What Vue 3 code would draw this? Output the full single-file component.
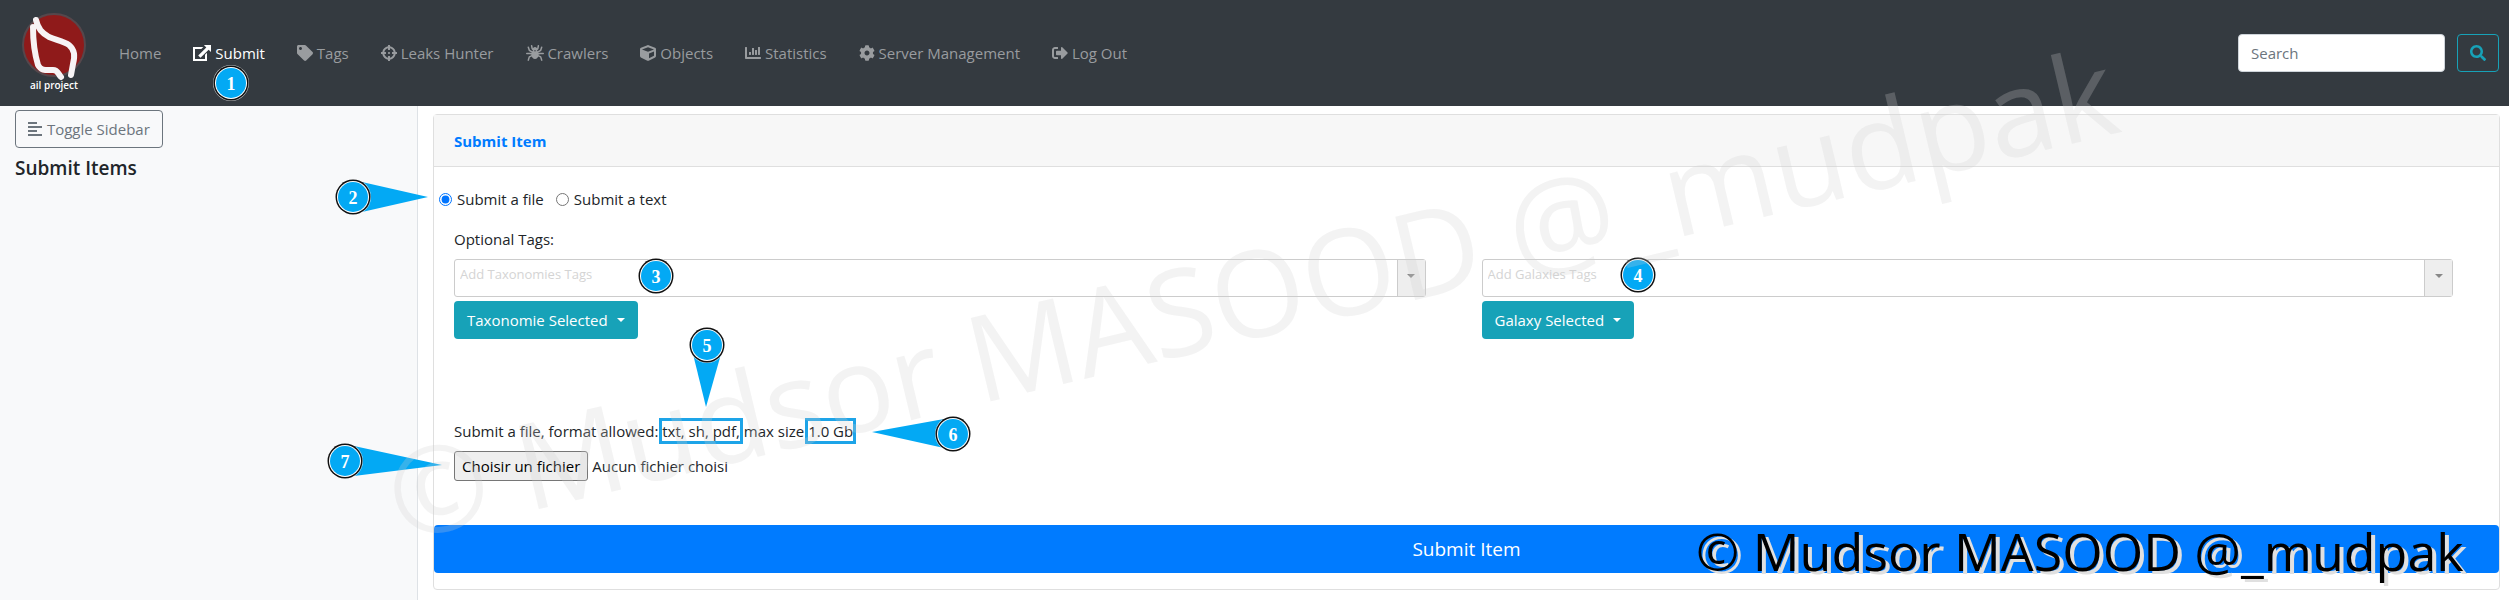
<template>
  <div class="page">
    <header class="navbar">
      <a class="brand" href="#" aria-label="ail project">
        <svg width="70" height="80" viewBox="0 0 70 80">
          <circle cx="36" cy="32" r="31" fill="#8f1a1a" stroke="#56474c" stroke-width="2" />
          <path
            d="M18 7 C20 16 24 20 31 24 C38 27 46 28 51 32 C57 37 57 43 55 51 L53 62 M15 14 C15 28 17 42 20 52 C23 58 28 57 35 57 C40 57 40 61 43 64"
            fill="none" stroke="#f7f3f5" stroke-width="6" stroke-linecap="round" stroke-linejoin="round"
          />
          <text x="36" y="76" text-anchor="middle" class="brand-text">ail project</text>
        </svg>
      </a>
      <nav class="nav-links">
        <a
          v-for="link in links"
          :key="link.label"
          href="#"
          class="nav-link"
          :class="{ active: link.active }"
        >
          <svg v-if="link.icon" class="icon" :class="{ wide: link.wide }" :viewBox="link.wide ? '0 0 576 512' : '0 0 512 512'">
            <path :d="link.icon" fill-rule="evenodd" />
            <path v-if="link.lines" :d="link.lines" class="icon-lines" />
          </svg>
          {{ link.label }}
        </a>
      </nav>
      <form class="search-form" @submit.prevent>
        <input v-model="query" class="search-input" type="search" placeholder="Search" aria-label="Search" />
        <button class="search-btn" type="submit" aria-label="Search">
          <svg class="icon" viewBox="0 0 512 512"><path :d="searchIcon" /></svg>
        </button>
      </form>
    </header>

    <div class="body-row">
      <aside class="sidebar">
        <button type="button" class="toggle-btn">
          <svg class="toggle-icon" viewBox="0 0 14 16">
            <path d="M0 1h9v2H0zM0 5h14v2H0zM0 9h9v2H0zM0 13h14v2H0z" />
          </svg>
          Toggle Sidebar
        </button>
        <h5 class="sidebar-title">Submit Items</h5>
      </aside>

      <main class="main">
        <form class="card" @submit.prevent>
          <div class="card-header">Submit Item</div>
          <div class="card-body">
            <div class="radios">
              <label><input v-model="mode" type="radio" name="mode" value="file" />Submit a file</label>
              <label><input v-model="mode" type="radio" name="mode" value="text" />Submit a text</label>
            </div>
            <div class="tags-label">Optional Tags:</div>
            <div class="tags-row">
              <div v-for="tag in tagFields" :key="tag.button" class="tag-col">
                <div class="tag-box">
                  <input type="text" class="tag-input" :placeholder="tag.placeholder" :aria-label="tag.placeholder" />
                  <button type="button" class="tag-trigger" :aria-label="tag.placeholder">
                    <span class="caret"></span>
                  </button>
                </div>
                <button type="button" class="selected-btn">{{ tag.button }}<span class="caret"></span></button>
              </div>
            </div>
            <p class="file-help">
              Submit a file, format allowed: <span class="highlight">txt, sh, pdf,</span> max size <span class="highlight">1.0 Gb</span>
            </p>
            <div class="file-row">
              <input id="file" type="file" class="file-input" />
              <label for="file" class="file-btn">Choisir un fichier</label>
              <span>Aucun fichier choisi</span>
            </div>
          </div>
          <button type="submit" class="submit-btn">Submit Item</button>
        </form>
      </main>
    </div>

    <!-- numbered callouts and copyright marks over the page -->
    <svg class="overlay">
      <g v-for="m in markers" :key="m.n">
        <polygon v-if="m.tip" :points="m.tip" fill="#03a9f4" />
        <circle :cx="m.x" :cy="m.y" r="18" fill="#fff" fill-opacity="0.7" />
        <circle :cx="m.x" :cy="m.y" r="17.5" fill="#111" />
        <circle :cx="m.x" :cy="m.y" r="16" fill="#fff" />
        <circle :cx="m.x" :cy="m.y" r="15" fill="#03a9f4" />
        <text :x="m.x" :y="m.y + 7" text-anchor="middle" class="marker-text">{{ m.n }}</text>
      </g>
      <text class="watermark" x="0" y="0" transform="translate(400 542) rotate(-13.4)">© Mudsor MASOOD @_mudpak</text>
      <text class="signature shade" x="1700" y="574">© Mudsor MASOOD @_mudpak</text>
      <text class="signature" x="1696" y="571">© Mudsor MASOOD @_mudpak</text>
    </svg>
  </div>
</template>

<script setup>
import { ref } from 'vue';

const query = ref('');
const mode = ref('file');

// Navigation
const links = [
  { label: 'Home' },
  {
    label: 'Submit',
    active: true,
    wide: true,
    icon: 'M0 64H330L266 128H64V448H384V310L448 246V512H0ZM350 0H576V226L500 150L240 410L166 336L426 76Z'
  },
  {
    label: 'Tags',
    icon: 'M0 252.118V48C0 21.49 21.49 0 48 0h204.118a48 48 0 0 1 33.941 14.059l211.882 211.882c18.745 18.745 18.745 49.137 0 67.882L293.823 497.941c-18.745 18.745-49.137 18.745-67.882 0L14.059 286.059A48 48 0 0 1 0 252.118zM112 64c-26.51 0-48 21.49-48 48s21.49 48 48 48 48-21.49 48-48-21.49-48-48-48z'
  },
  {
    label: 'Leaks Hunter',
    icon: 'M500 224h-30.364C455.724 130.325 381.675 56.276 288 42.364V12c0-6.627-5.373-12-12-12h-40c-6.627 0-12 5.373-12 12v30.364C130.325 56.276 56.276 130.325 42.364 224H12c-6.627 0-12 5.373-12 12v40c0 6.627 5.373 12 12 12h30.364C56.276 381.675 130.325 455.724 224 469.636V500c0 6.627 5.373 12 12 12h40c6.627 0 12-5.373 12-12v-30.364C381.675 455.724 455.724 381.675 469.636 288H500c6.627 0 12-5.373 12-12v-40c0-6.627-5.373-12-12-12zM288 404.634V364c0-6.627-5.373-12-12-12h-40c-6.627 0-12 5.373-12 12v40.634C165.826 392.232 119.783 346.243 107.366 288H148c6.627 0 12-5.373 12-12v-40c0-6.627-5.373-12-12-12h-40.634C119.768 165.826 165.757 119.783 224 107.366V148c0 6.627 5.373 12 12 12h40c6.627 0 12-5.373 12-12v-40.634C346.174 119.768 392.217 165.757 404.634 224H364c-6.627 0-12 5.373-12 12v40c0 6.627 5.373 12 12 12h40.634C392.232 346.174 346.243 392.217 288 404.634zM288 256c0 17.673-14.327 32-32 32s-32-14.327-32-32c0-17.673 14.327-32 32-32s32 14.327 32 32z'
  },
  {
    label: 'Crawlers',
    wide: true,
    icon: 'M288 160C370 160 400 240 400 310C400 390 350 448 288 448S176 390 176 310C176 240 206 160 288 160ZM288 64C334 64 362 96 362 134S330 200 288 200S214 172 214 134S242 64 288 64Z',
    lines: 'M24 272H130L210 290M552 272H446L366 290M74 70L106 170L210 232M502 70L470 170L366 232M74 484L106 380L210 330M502 484L470 380L366 330M180 24L196 110L250 180M396 24L380 110L326 180'
  },
  {
    label: 'Objects',
    icon: 'M239.1 6.3l-208 78c-18.7 7-31.1 25-31.1 45v225.1c0 18.2 10.3 34.8 26.5 42.9l208 104c13.5 6.8 29.4 6.8 42.9 0l208-104c16.3-8.1 26.5-24.8 26.5-42.9V129.3c0-20-12.4-37.9-31.1-44.9l-208-78C262 2.2 250 2.2 239.1 6.3zM256 68.4l192 72v1.1l-192 78-192-78v-1.1l192-72zm32 356V275.5l160-65v133.9l-160 80z'
  },
  {
    label: 'Statistics',
    icon: 'M332.8 320h38.4c6.4 0 12.8-6.4 12.8-12.8V172.8c0-6.4-6.4-12.8-12.8-12.8h-38.4c-6.4 0-12.8 6.4-12.8 12.8v134.4c0 6.4 6.4 12.8 12.8 12.8zm96 0h38.4c6.4 0 12.8-6.4 12.8-12.8V76.8c0-6.4-6.4-12.8-12.8-12.8h-38.4c-6.4 0-12.8 6.4-12.8 12.8v230.4c0 6.4 6.4 12.8 12.8 12.8zm-288 0h38.4c6.4 0 12.8-6.4 12.8-12.8v-70.4c0-6.4-6.4-12.8-12.8-12.8h-38.4c-6.4 0-12.8 6.4-12.8 12.8v70.4c0 6.4 6.4 12.8 12.8 12.8zm96 0h38.4c6.4 0 12.8-6.4 12.8-12.8V108.8c0-6.4-6.4-12.8-12.8-12.8h-38.4c-6.4 0-12.8 6.4-12.8 12.8v198.4c0 6.4 6.4 12.8 12.8 12.8zM496 384H64V80c0-8.84-7.16-16-16-16H16C7.16 64 0 71.16 0 80v336c0 17.67 14.33 32 32 32h464c8.84 0 16-7.16 16-16v-32c0-8.84-7.16-16-16-16z'
  },
  {
    label: 'Server Management',
    icon: 'M487.4 315.7l-42.6-24.6c4.3-23.2 4.3-47 0-70.2l42.6-24.6c4.9-2.8 7.1-8.6 5.5-14-11.1-35.6-30-67.8-54.7-94.6-3.8-4.1-10-5.1-14.8-2.3L380.8 110c-17.9-15.4-38.5-27.3-60.8-35.1V25.8c0-5.6-3.9-10.5-9.4-11.7-36.7-8.2-74.3-7.8-109.2 0-5.5 1.2-9.4 6.1-9.4 11.7V75c-22.2 7.9-42.8 19.8-60.8 35.1L88.7 85.5c-4.9-2.8-11-1.9-14.8 2.3-24.7 26.7-43.6 58.9-54.7 94.6-1.7 5.4.6 11.2 5.5 14L67.3 221c-4.3 23.2-4.3 47 0 70.2l-42.6 24.6c-4.9 2.8-7.1 8.6-5.5 14 11.1 35.6 30 67.8 54.7 94.6 3.8 4.1 10 5.1 14.8 2.3l42.6-24.6c17.9 15.4 38.5 27.3 60.8 35.1v49.2c0 5.6 3.9 10.5 9.4 11.7 36.7 8.2 74.3 7.8 109.2 0 5.5-1.2 9.4-6.1 9.4-11.7v-49.2c22.2-7.9 42.8-19.8 60.8-35.1l42.6 24.6c4.9 2.8 11 1.9 14.8-2.3 24.7-26.7 43.6-58.9 54.7-94.6 1.5-5.5-.7-11.3-5.6-14.1zM256 336c-44.1 0-80-35.9-80-80s35.9-80 80-80 80 35.9 80 80-35.9 80-80 80z'
  },
  {
    label: 'Log Out',
    icon: 'M497 273L329 441c-15 15-41 4.5-41-17v-96H152c-13.3 0-24-10.7-24-24v-96c0-13.3 10.7-24 24-24h136V88c0-21.4 25.9-32 41-17l168 168c9.3 9.4 9.3 24.6 0 34zM192 436v-40c0-6.6-5.4-12-12-12H96c-17.7 0-32-14.3-32-32V160c0-17.7 14.3-32 32-32h84c6.6 0 12-5.4 12-12V76c0-6.6-5.4-12-12-12H96c-53 0-96 43-96 96v192c0 53 43 96 96 96h84c6.6 0 12-5.4 12-12z'
  }
];

const searchIcon = 'M505 442.7L405.3 343c-4.5-4.5-10.6-7-17-7H372c27.6-35.3 44-79.7 44-128C416 93.1 322.9 0 208 0S0 93.1 0 208s93.1 208 208 208c48.3 0 92.7-16.4 128-44v16.3c0 6.4 2.5 12.5 7 17l99.7 99.7c9.4 9.4 24.6 9.4 33.9 0l28.3-28.3c9.4-9.4 9.4-24.6.1-34zM208 336c-70.7 0-128-57.2-128-128 0-70.7 57.2-128 128-128 70.7 0 128 57.2 128 128 0 70.7-57.2 128-128 128z';

const tagFields = [
  { placeholder: 'Add Taxonomies Tags', button: 'Taxonomie Selected' },
  { placeholder: 'Add Galaxies Tags', button: 'Galaxy Selected' }
];

// Callouts: circle centre, and the pointer polygon when there is one
const markers = [
  { n: 1, x: 231, y: 83 },
  { n: 2, x: 353, y: 197, tip: '362,182 428,197 362,212' },
  { n: 3, x: 656, y: 276 },
  { n: 4, x: 1638, y: 275 },
  { n: 5, x: 707, y: 345, tip: '693,354 706,407 721,354' },
  { n: 6, x: 953, y: 434, tip: '944,419 872,432 944,448' },
  { n: 7, x: 345, y: 461, tip: '354,446 442,465 354,476' }
];
</script>

<style>
body {
  margin: 0;
}
</style>

<style scoped>
.page {
  position: relative;
  display: flex;
  flex-direction: column;
  min-height: 100vh;
  overflow: hidden;
  background: #fff;
  color: #212529;
  font-family: "Open Sans", "Noto Sans", sans-serif;
  font-size: 15px;
  line-height: 24px;
}

.page *,
.page *::before {
  box-sizing: border-box;
}

button,
input {
  font: inherit;
}

/* Navbar */
.navbar {
  display: flex;
  align-items: center;
  height: 106px;
  padding: 0 10px 0 18px;
  background: #343a40;
}

.brand {
  display: flex;
  margin-right: 23px;
}

.brand-text {
  fill: #fff;
  font-size: 10px;
  font-weight: 600;
}

.nav-links {
  display: flex;
  gap: 16px;
}

.nav-link {
  padding: 8px;
  color: #999c9f;
  text-decoration: none;
  white-space: nowrap;
}

.nav-link.active {
  color: #fff;
}

.icon {
  width: 16px;
  height: 16px;
  fill: currentColor;
  vertical-align: -2px;
}

.icon.wide {
  width: 18px;
}

.icon-lines {
  fill: none;
  stroke: currentColor;
  stroke-width: 48;
  stroke-linecap: round;
  stroke-linejoin: round;
}

.search-form {
  display: flex;
  gap: 12px;
  margin-left: auto;
}

.search-input {
  width: 207px;
  height: 38px;
  padding: 6px 12px;
  border: 1px solid #ced4da;
  border-radius: 4px;
  background: #fff;
}

.search-input::placeholder {
  color: #6c757d;
}

.search-btn {
  width: 42px;
  height: 38px;
  padding: 0;
  border: 1px solid #17a2b8;
  border-radius: 4px;
  background: none;
  color: #17a2b8;
}

/* Sidebar */
.body-row {
  display: flex;
  flex: 1;
}

.sidebar {
  width: 418px;
  padding: 4px 15px;
  border-right: 1px solid #dee2e6;
  background: #f8f9fa;
}

.toggle-btn {
  height: 38px;
  padding: 0 12px;
  border: 1px solid #6c757d;
  border-radius: 4px;
  background: none;
  color: #6c757d;
}

.toggle-icon {
  width: 14px;
  height: 16px;
  margin-right: 1px;
  fill: currentColor;
  vertical-align: -2px;
}

.sidebar-title {
  margin: 8px 0;
  font-size: 19px;
  font-weight: 600;
  line-height: 24px;
}

/* Card */
.main {
  flex: 1;
  padding: 8px 9px 10px 15px;
}

.card {
  display: flex;
  flex-direction: column;
  padding-bottom: 16px;
  border: 1px solid #dfdfdf;
  border-radius: 4px;
}

.card-header {
  padding: 14px 20px 13px;
  border-bottom: 1px solid #dfdfdf;
  background: #f7f7f7;
  color: #007bff;
  font-weight: 700;
}

.card-body {
  padding: 20px 20px 44px;
}

.radios {
  display: flex;
  gap: 12px;
  margin-left: -15px;
}

.radios label {
  display: flex;
  align-items: center;
  gap: 5px;
}

.radios input {
  width: 13px;
  height: 13px;
  margin: 0;
}

.tags-label {
  margin: 16px 0 8px;
}

.tags-row {
  display: grid;
  grid-template-columns: 1fr 1fr;
  gap: 56px;
  margin-right: 26px;
}

.tag-box {
  display: flex;
  height: 38px;
  margin-bottom: 4px;
  border: 1px solid #ccc;
  border-radius: 3px;
}

.tag-input {
  flex: 1;
  padding: 0 5px 9px;
  border: 0;
  background: none;
  font-size: 13px;
}

.tag-input::placeholder {
  color: #d4d4d4;
}

.tag-trigger {
  width: 28px;
  padding: 0 0 4px;
  border: 0;
  border-left: 1px solid #ccc;
  background: #eee;
  color: #888;
}

.caret {
  display: inline-block;
  border: 4px solid transparent;
  border-top-color: currentColor;
  border-bottom: 0;
  vertical-align: 4px;
}

.selected-btn {
  height: 38px;
  padding: 0 13px;
  border: 0;
  border-radius: 4px;
  background: #17a2b8;
  color: #fff;
}

.selected-btn .caret {
  margin-left: 9px;
}

.file-help {
  margin: 80px 0 8px;
}

.highlight {
  outline: 3px solid #1da4e8;
}

.file-row {
  display: flex;
  align-items: center;
  gap: 4px;
  height: 30px;
}

.file-input {
  position: absolute;
  width: 1px;
  height: 1px;
  opacity: 0;
}

.file-btn {
  padding: 2px 7px;
  border: 1px solid #767676;
  border-radius: 3px;
  background: #efefef;
  color: #000;
}

.submit-btn {
  height: 48px;
  border: 0;
  border-radius: 4px;
  background: #007bff;
  color: #fff;
  font-size: 19px;
}

/* Overlay */
.overlay {
  position: absolute;
  top: 0;
  left: 0;
  width: 100%;
  height: 100%;
  pointer-events: none;
}

.marker-text {
  fill: #fff;
  font-family: "Liberation Serif", serif;
  font-size: 18px;
  font-weight: 700;
}

.watermark {
  fill: rgba(207, 207, 207, 0.25);
  font-family: "Open Sans", sans-serif;
  font-size: 120px;
}

.signature {
  fill: #000;
  font-family: "Open Sans", sans-serif;
  font-size: 52px;
}

.signature.shade {
  fill: #e0e0e0;
}
</style>
